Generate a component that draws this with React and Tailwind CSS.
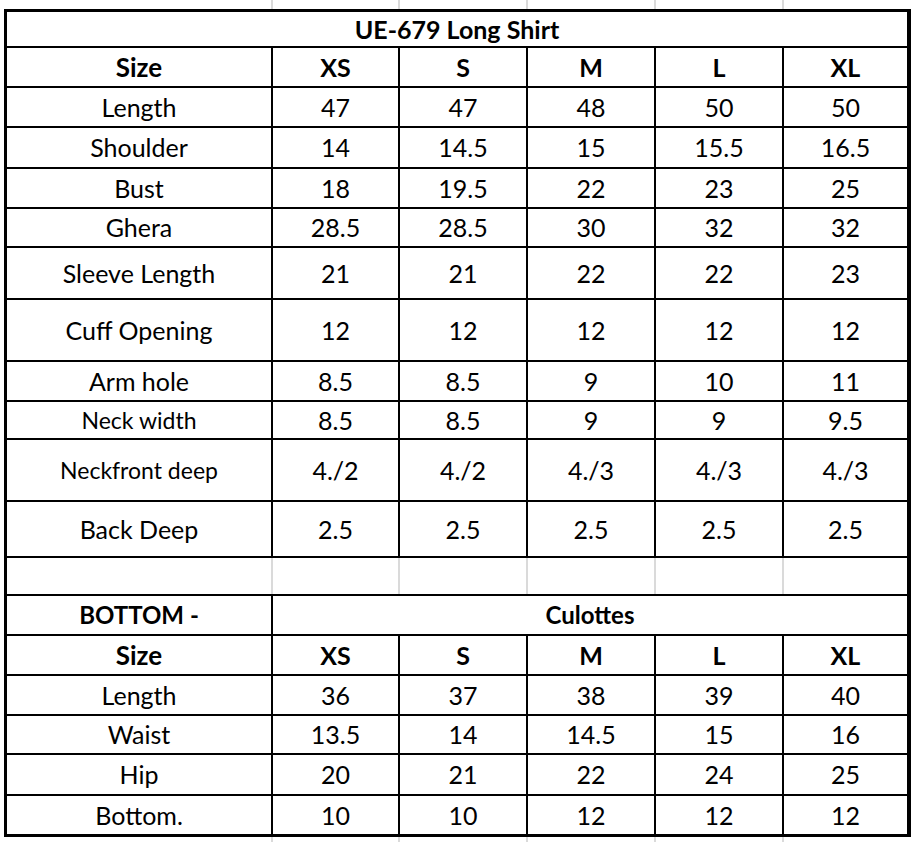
import React from "react";

const COLS = "grid grid-cols-[264px_125px_126px_126px_126px_123px] gap-[2px]";

const top = [
  { label: "Length", vals: ["47", "47", "48", "50", "50"] },
  { label: "Shoulder", vals: ["14", "14.5", "15", "15.5", "16.5"] },
  { label: "Bust", vals: ["18", "19.5", "22", "23", "25"] },
  { label: "Ghera", vals: ["28.5", "28.5", "30", "32", "32"] },
  { label: "Sleeve Length", vals: ["21", "21", "22", "22", "23"] },
  { label: "Cuff Opening", vals: ["12", "12", "12", "12", "12"] },
  { label: "Arm hole", vals: ["8.5", "8.5", "9", "10", "11"] },
  { label: "Neck width", vals: ["8.5", "8.5", "9", "9", "9.5"], small: true },
  { label: "Neckfront deep", vals: ["4./2", "4./2", "4./3", "4./3", "4./3"], small: true },
  { label: "Back Deep", vals: ["2.5", "2.5", "2.5", "2.5", "2.5"] },
];

const bottom = [
  { label: "Length", vals: ["36", "37", "38", "39", "40"] },
  { label: "Waist", vals: ["13.5", "14", "14.5", "15", "16"] },
  { label: "Hip", vals: ["20", "21", "22", "24", "25"] },
  { label: "Bottom.", vals: ["10", "10", "12", "12", "12"] },
];

const sizes = ["XS", "S", "M", "L", "XL"];

function Cell({ children, className = "" }) {
  return (
    <div className={"bg-white flex items-center justify-center leading-none " + className}>
      {children}
    </div>
  );
}

function DataRow({ row }) {
  const size = row.small ? "text-[23px]" : "text-[25px]";
  return (
    <>
      <Cell className={size}>{row.label}</Cell>
      {row.vals.map((v, i) => (
        <Cell key={i} className="text-[25px]">{v}</Cell>
      ))}
    </>
  );
}

function SizeRow() {
  return (
    <>
      <Cell className="text-[26px] font-bold">Size</Cell>
      {sizes.map((s) => (
        <Cell key={s} className="text-[25px] font-bold">{s}</Cell>
      ))}
    </>
  );
}

function Strip({ h }) {
  return (
    <div className={"ml-[7px] w-[900px] bg-[#dadada] " + COLS + " " + h}>
      {[0, 1, 2, 3, 4, 5].map((i) => (
        <div key={i} className="bg-white" />
      ))}
    </div>
  );
}

export default function App() {
  return (
    <div className="w-[914px] h-[842px] bg-white overflow-hidden text-black font-['Lato',sans-serif]">
      <Strip h="h-[9px]" />

      <div className="ml-[4px] w-[907px] bg-black border-l-[3px] border-t-[3px] border-b-[3px] border-r-[4px] border-black">
        <div
          className={
            COLS +
            " grid-rows-[34px_38px_38px_39px_38px_37px_50px_60px_38px_36px_60px_54px_36px_38px_38px_38px_37px_39px_38px]"
          }
        >
          {/* Title */}
          <Cell className="col-span-6 text-[25px] font-bold">UE-679 Long Shirt</Cell>
          <SizeRow />
          {top.map((r) => (
            <DataRow key={r.label} row={r} />
          ))}

          {/* Empty spacer row with faint gridlines */}
          <div className={"col-span-6 bg-[#dadada] " + COLS}>
            {[0, 1, 2, 3, 4, 5].map((i) => (
              <div key={i} className="bg-white" />
            ))}
          </div>

          {/* Bottom section */}
          <Cell className="text-[24px] font-bold">BOTTOM -</Cell>
          <Cell className="col-span-5 text-[24px] font-bold">Culottes</Cell>
          <SizeRow />
          {bottom.map((r) => (
            <DataRow key={r.label} row={r} />
          ))}
        </div>
      </div>

      <Strip h="h-[5px]" />
    </div>
  );
}
